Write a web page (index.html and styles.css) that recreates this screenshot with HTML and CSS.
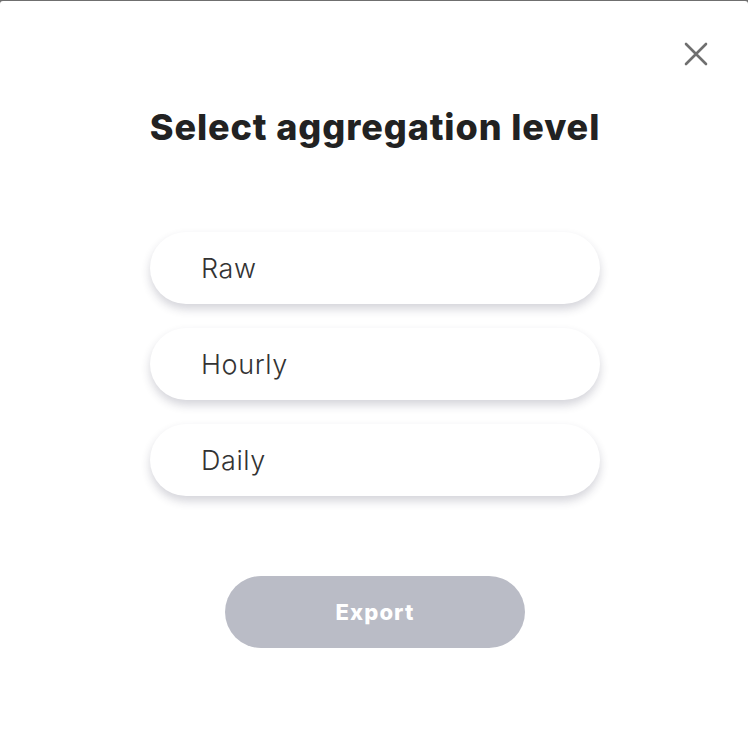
FILE: index.html
```html
<!DOCTYPE html>
<html lang="en">
<head>
    <meta charset="UTF-8">
    <meta name="viewport" content="width=device-width, initial-scale=1.0">
    <title>Select aggregation level</title>
    <link rel="stylesheet" href="styles.css">
</head>
<body>
    <div class="dialog">
        <div class="dialog-top">
            <button class="close" aria-label="Close">
                <svg width="24" height="24" viewBox="0 0 24 24">
                    <path d="M2 2 L22 22 M22 2 L2 22" stroke="#6f6f6f" stroke-width="2.6" stroke-linecap="round" fill="none"/>
                </svg>
            </button>
        </div>
        <h1>Select aggregation level</h1>
        <div class="options">
            <button class="option">Raw</button>
            <button class="option">Hourly</button>
            <button class="option">Daily</button>
        </div>
        <button class="export" disabled>Export</button>
    </div>
</body>
</html>
```

FILE: styles.css
```css
body {
    margin: 0;
    padding: 0;
    background-color: #6f6f6f;
    font-family: "Inter", "Open Sans", sans-serif;
    color: #222;
}
.dialog {
    background: #ffffff;
    margin-top: 1px;
    height: 744px;
    padding-left: 2px;
    border-radius: 3px 3px 0 0;
    display: flex;
    flex-direction: column;
    align-items: center;
}
.dialog-top {
    align-self: stretch;
    display: flex;
    justify-content: flex-end;
    padding: 41px 40px 0 0;
    height: 26px;
}
.close {
    background: none;
    border: none;
    padding: 0;
    width: 24px;
    height: 24px;
    cursor: pointer;
}
h1 {
    margin: 35px 0 0;
    font-size: 36px;
    font-weight: 800;
    line-height: 48px;
    letter-spacing: 0.9px;
    color: #222222;
}
.options {
    margin-top: 81px;
    display: flex;
    flex-direction: column;
    gap: 24px;
}
.option {
    width: 450px;
    height: 72px;
    border: none;
    border-radius: 36px;
    background: #ffffff;
    box-shadow: 0 5px 10px rgba(40, 40, 70, 0.2);
    text-align: left;
    padding: 0 0 0 51px;
    font-family: inherit;
    font-size: 27px;
    font-weight: 300;
    letter-spacing: 0.6px;
    color: #333333;
    cursor: pointer;
}
.export {
    margin-top: 80px;
    width: 300px;
    height: 72px;
    border: none;
    border-radius: 36px;
    background: #babcc6;
    color: #ffffff;
    font-family: inherit;
    font-size: 22px;
    font-weight: 800;
    letter-spacing: 1.1px;
}
```
